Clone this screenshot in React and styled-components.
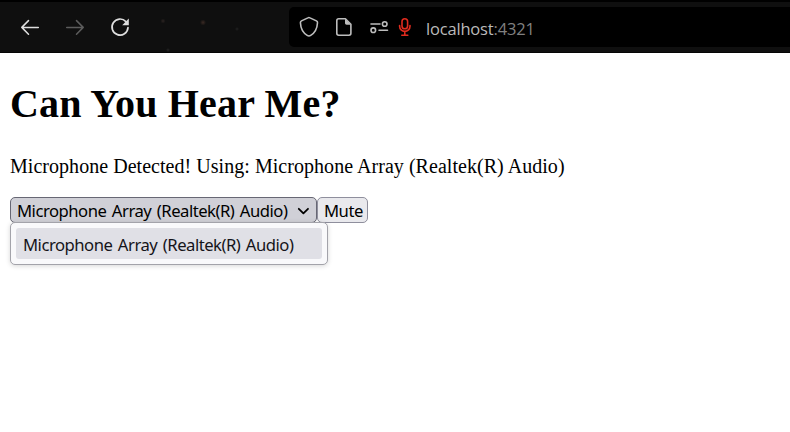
import React from "react";
import styled, { createGlobalStyle } from "styled-components";

const GlobalStyle = createGlobalStyle`
  * { box-sizing: border-box; }
  body { margin: 0; background: #fff; overflow: hidden; }
`;

const Window = styled.div`
  height: 432px;
  display: flex;
  flex-direction: column;
  background: #fff;
`;

const Toolbar = styled.header`
  height: 53px;
  flex: none;
  display: flex;
  align-items: stretch;
  padding: 5px 0 5px 15px;
  border-top: 2px solid #000;
  border-bottom: 1px solid #050505;
  background:
    radial-gradient(circle at 203px 20.5px, #3b2a24 0, #0f0f0f 3px, transparent 3px),
    radial-gradient(circle at 163px 19px, #2c2422 0, #0f0f0f 2.5px, transparent 3px),
    radial-gradient(circle at 168px 48px, #262626 0, #0f0f0f 2px, transparent 2px),
    radial-gradient(circle at 237px 27px, #222 0, #0f0f0f 2px, transparent 2px),
    #0f0f0f;
`;

const Navigation = styled.nav`
  width: 274px;
  display: flex;
  align-items: center;
  gap: 15px;
`;

const NavButton = styled.button`
  width: 30px;
  height: 30px;
  padding: 0;
  border: 0;
  background: none;
  display: grid;
  place-items: center;
  color: ${(p) => (p.disabled ? "#5c5c5c" : "#dedede")};
`;

const AddressBar = styled.div`
  flex: 1;
  display: flex;
  align-items: center;
  background: #000;
  border-radius: 5px 0 0 5px;
  padding-left: 9px;
  color: #bdbdbd;
`;

const Icon = styled.svg`
  display: block;
  flex: none;
  fill: none;
  stroke: currentColor;
  stroke-width: ${(p) => p.$weight || 1.5};
  stroke-linecap: round;
  stroke-linejoin: round;
  margin-right: ${(p) => p.$gap || 0}px;
  color: ${(p) => p.$color || "inherit"};
`;

const Url = styled.span`
  font: 16.5px/22px "Open Sans", "Noto Sans", sans-serif;
  letter-spacing: -0.18px;
  white-space: nowrap;
  color: #bababa;
  padding-top: 4px;
`;

const Port = styled.span`
  color: #808080;
`;

const Page = styled.main`
  padding: 28px 10px 0;
  font-family: "Liberation Serif", serif;
  color: #000;
`;

const Title = styled.h1`
  margin: 0;
  font-size: 40px;
  line-height: 46px;
  font-weight: 700;
  letter-spacing: 0.18px;
`;

const Status = styled.p`
  margin: 28px 0 19px;
  font-size: 20px;
  line-height: 23px;
  letter-spacing: 0.04px;
`;

const Controls = styled.div`
  display: flex;
  position: relative;
`;

const Control = styled.button`
  height: 26px;
  padding: 1px 6px 0;
  border: 1px solid ${(p) => (p.$open ? "#676774" : "#8f8f9d")};
  border-radius: 5px;
  background: ${(p) => (p.$open ? "#d0d0d7" : "#e9e9ed")};
  width: ${(p) => p.$width}px;
  display: flex;
  align-items: center;
  justify-content: space-between;
  font: 16.67px/24px "Noto Sans", sans-serif;
  color: #000;
  white-space: nowrap;
`;

const Label = styled.span`
  letter-spacing: -0.5px;
  word-spacing: 1.7px;
`;

const Menu = styled.ul`
  position: absolute;
  left: 0;
  top: 25px;
  width: 318px;
  height: 43px;
  margin: 0;
  padding: 5px;
  list-style: none;
  background: #f9f9fb;
  border: 1px solid #a3a3aa;
  border-radius: 5px;
  box-shadow: 0 1px 5px rgba(0, 0, 0, 0.16);
`;

const Option = styled.li`
  height: 31px;
  padding: 1px 7px 0;
  border-radius: 3px;
  background: #e0e0e6;
  font: 16.67px/31px "Noto Sans", sans-serif;
  color: #15141a;
  white-space: nowrap;
`;

const device = "Microphone Array (Realtek(R) Audio)";

export default function App() {
  return (
    <Window>
      <GlobalStyle />
      <Toolbar>
        <Navigation>
          <NavButton aria-label="Back">
            <Icon width="20" height="20" viewBox="0 0 20 20">
              <path d="M18.3 10.4H1.8M8.5 3.6 1.8 10.4l6.7 6.8" />
            </Icon>
          </NavButton>
          <NavButton aria-label="Forward" disabled>
            <Icon width="20" height="20" viewBox="0 0 20 20">
              <path d="M1.7 10.4h16.5M11.5 3.6l6.7 6.8-6.7 6.8" />
            </Icon>
          </NavButton>
          <NavButton aria-label="Reload">
            <Icon width="20" height="20" viewBox="0 0 20 20" $weight={1.7}>
              <path d="M15.9 4.600A8 8 0 1 0 18 10.6" />
              <path d="M18.8 1.600v6.600h-6.600Z" fill="currentColor" stroke="none" />
            </Icon>
          </NavButton>
        </Navigation>
        <AddressBar>
          <Icon width="22" height="22" viewBox="0 0 22 22" $gap={14} $weight={1.6}>
            <path d="M10.9 1.5c.5 0 .8.2 1.1.4l6.4 3c.8.4 1.2.9 1.1 1.8-.3 5.8-2.5 10-6.8 12.7-1.2.8-2.3.8-3.5 0C4.900 16.700 2.700 12.500 2.400 6.700c0-.9.3-1.400 1.100-1.800l6.400-3c.300-.2.600-.4 1-.4Z" />
          </Icon>
          <Icon width="20" height="20" viewBox="0 0 20 20" $gap={15} $weight={1.6}>
            <path d="M11.4 1.800H4.700c-1.200 0-1.900.7-1.900 1.900v12.600c0 1.200.7 1.900 1.900 1.900h10.300c1.200 0 1.900-.7 1.900-1.900V7.300Z" />
            <path d="M11 1.800v4.300c0 1 .6 1.600 1.600 1.600h4.300Z" fill="currentColor" stroke="none" />
          </Icon>
          <Icon width="20" height="20" viewBox="0 0 20 20" $gap={7} $weight={1.6}>
            <path d="M2 7h9M10 13.200h8.500" />
            <circle cx="15.700" cy="7" r="2.300" />
            <circle cx="4.300" cy="13.200" r="2.300" />
          </Icon>
          <Icon width="18" height="20" viewBox="0 0 18 20" $gap={12} $weight={1.6} $color="#e02b1e">
            <rect x="6" y="1.700" width="5.600" height="10" rx="2.800" />
            <path d="M3.600 8.600v.6a5.200 5.200 0 0 0 10.400 0v-.6M8.800 14.500v3.700M5.800 18.300h6" />
          </Icon>
          <Url>
            localhost<Port>:4321</Port>
          </Url>
        </AddressBar>
      </Toolbar>
      <Page>
        <Title>Can You Hear Me?</Title>
        <Status>Microphone Detected! Using: {device}</Status>
        <Controls>
          <Control $open $width={307} aria-expanded="true">
            <Label>{device}</Label>
            <Icon width="13" height="12" viewBox="0 0 13 12" $weight={1.8}>
              <path d="M1.800 3.800 6.400 8.300 11 3.800" />
            </Icon>
          </Control>
          <Control $width={51}>
            <Label>Mute</Label>
          </Control>
          <Menu>
            <Option>
              <Label>{device}</Label>
            </Option>
          </Menu>
        </Controls>
      </Page>
    </Window>
  );
}
